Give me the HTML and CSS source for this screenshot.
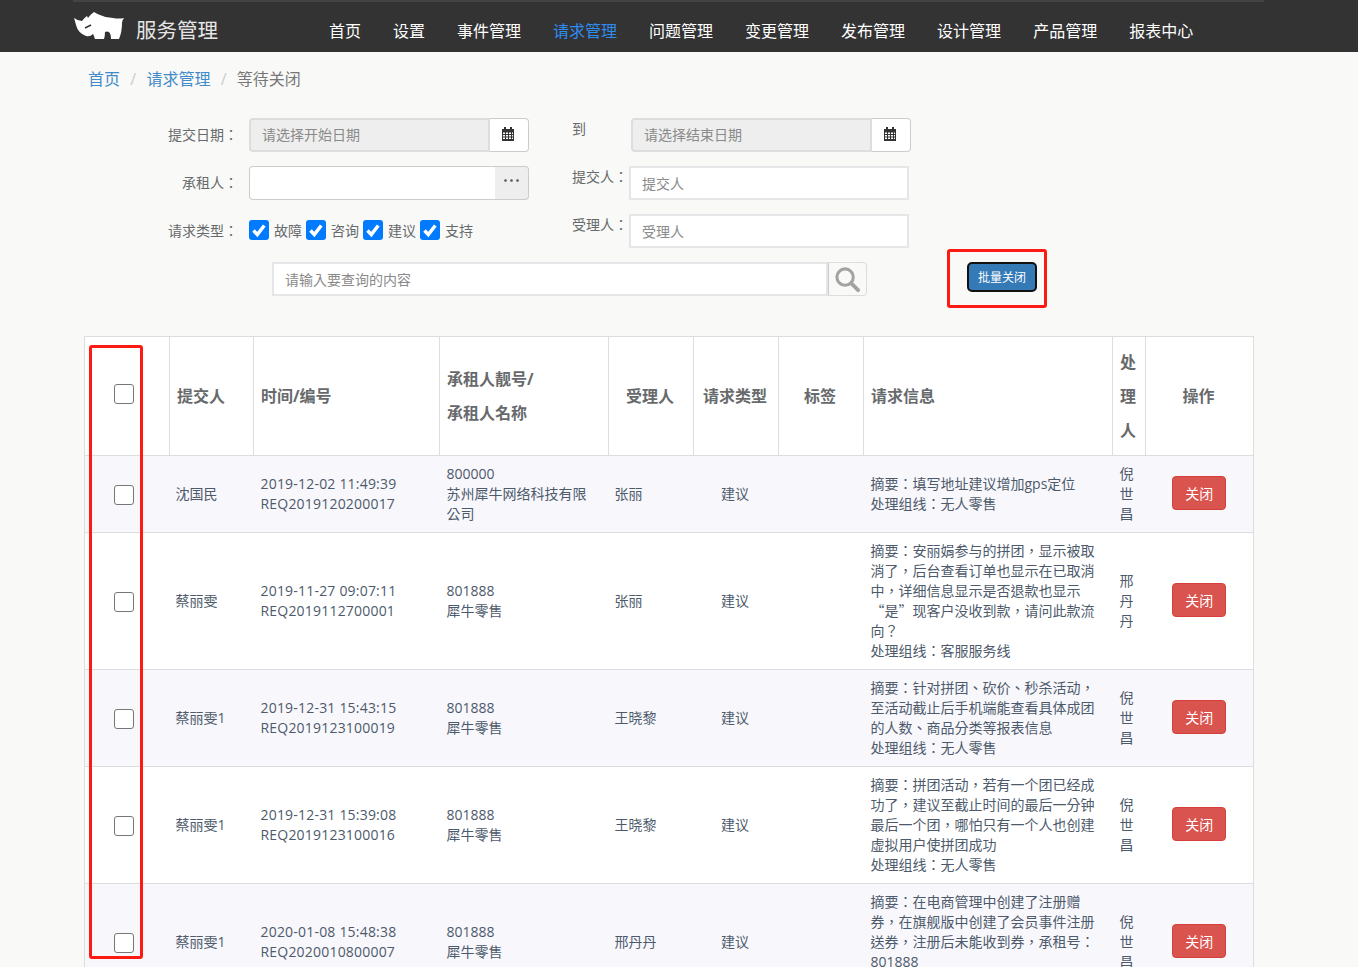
FILE: index.html
```html
<!DOCTYPE html>
<html lang="zh-CN">
<head>
  <meta charset="UTF-8">
  <title>服务管理</title>
  <link rel="stylesheet" href="styles.css">
</head>
<body>
  <div class="navbar">
    <div class="navbar-inner">
      <a class="brand">
        <svg class="logo" viewBox="0 0 51 27">
          <path fill="#fff" d="M1 6 Q5 9 9 9 Q11 6 14 4 L15 6 Q18 2 21 0 Q24 2 27 3 Q33 6 40 6 Q46 7 51 6 Q49 8 49 11 Q49 20 46 27 L38 27 Q38 22 36 20 Q34 19 32 20 Q32 24 31 27 L22 27 Q21 24 20 22 Q17 25 13 24 Q5 21 3 13 Q2 9 1 6 Z"/>
          <path fill="none" stroke="#333" stroke-width="1.500" d="M12 16 L18 13"/>
        </svg>
        <span class="brand-name">服务管理</span>
      </a>
      <ul class="nav">
        <li>首页</li>
        <li>设置</li>
        <li>事件管理</li>
        <li class="active">请求管理</li>
        <li>问题管理</li>
        <li>变更管理</li>
        <li>发布管理</li>
        <li>设计管理</li>
        <li>产品管理</li>
        <li>报表中心</li>
      </ul>
    </div>
  </div>

  <ol class="breadcrumb">
    <li><a>首页</a></li>
    <li class="sep">/</li>
    <li><a>请求管理</a></li>
    <li class="sep">/</li>
    <li class="current">等待关闭</li>
  </ol>

  <form class="filter">
    <div class="filter-left">
      <div class="row">
        <label>提交日期：</label>
        <div class="input-group">
          <input class="control readonly" placeholder="请选择开始日期" readonly>
          <span class="addon white">
            <svg class="cal" viewBox="0 0 14 14"><path fill="#333" d="M1 2h2V0h2v2h4V0h2v2h2v12H1z"/><path fill="#fff" d="M2 5.500h2v1.500H2zM5 5.500h2v1.500H5zM8 5.500h2v1.500H8zM11 5.500h1v1.500h-1zM2 8h2v1.500H2zM5 8h2v1.500H5zM8 8h2v1.500H8zM11 8h1v1.500h-1zM2 10.500h2V12H2zM5 10.500h2V12H5zM8 10.500h2V12H8zM11 10.500h1V12h-1z"/></svg>
          </span>
        </div>
      </div>
      <div class="row">
        <label>承租人：</label>
        <div class="input-group">
          <input class="control thin">
          <span class="addon grey">
            <svg class="dots" viewBox="0 0 15 3"><circle cx="1.500" cy="1.500" r="1.300" fill="#555"/><circle cx="7.500" cy="1.500" r="1.300" fill="#555"/><circle cx="13.500" cy="1.500" r="1.300" fill="#555"/></svg>
          </span>
        </div>
      </div>
      <div class="row">
        <label>请求类型：</label>
        <div class="checks">
          <span class="tick"><svg viewBox="0 0 20 20"><path fill="none" stroke="#fff" stroke-width="3.500" d="M4.500 10.500l3.800 4 7-9"/></svg></span><span class="tick-label">故障</span>
          <span class="tick"><svg viewBox="0 0 20 20"><path fill="none" stroke="#fff" stroke-width="3.500" d="M4.500 10.500l3.800 4 7-9"/></svg></span><span class="tick-label">咨询</span>
          <span class="tick"><svg viewBox="0 0 20 20"><path fill="none" stroke="#fff" stroke-width="3.500" d="M4.500 10.500l3.800 4 7-9"/></svg></span><span class="tick-label">建议</span>
          <span class="tick"><svg viewBox="0 0 20 20"><path fill="none" stroke="#fff" stroke-width="3.500" d="M4.500 10.500l3.800 4 7-9"/></svg></span><span class="tick-label">支持</span>
        </div>
      </div>
    </div>
    <div class="filter-right">
      <div class="row">
        <label class="top">到</label>
        <div class="input-group date-end">
          <input class="control readonly" placeholder="请选择结束日期" readonly>
          <span class="addon white">
            <svg class="cal" viewBox="0 0 14 14"><path fill="#333" d="M1 2h2V0h2v2h4V0h2v2h2v12H1z"/><path fill="#fff" d="M2 5.500h2v1.500H2zM5 5.500h2v1.500H5zM8 5.500h2v1.500H8zM11 5.500h1v1.500h-1zM2 8h2v1.500H2zM5 8h2v1.500H5zM8 8h2v1.500H8zM11 8h1v1.500h-1zM2 10.500h2V12H2zM5 10.500h2V12H5zM8 10.500h2V12H8zM11 10.500h1V12h-1z"/></svg>
          </span>
        </div>
      </div>
      <div class="row">
        <label class="top">提交人：</label>
        <input class="control plain" placeholder="提交人">
      </div>
      <div class="row">
        <label class="top">受理人：</label>
        <input class="control plain" placeholder="受理人">
      </div>
    </div>
    <div class="search-row">
      <div class="search">
        <input class="control" placeholder="请输入要查询的内容">
        <span class="search-btn">
          <svg viewBox="0 0 28 28"><circle cx="11.500" cy="11.500" r="8.500" fill="none" stroke="#a3a3a3" stroke-width="3.200"/><path stroke="#a3a3a3" stroke-width="4" stroke-linecap="round" d="M18 18l7 7"/></svg>
        </span>
      </div>
      <button type="button" class="btn-batch">批量关闭</button>
    </div>
  </form>

  <div class="mark mark-batch"></div>
  <div class="mark mark-checks"></div>

  <table class="list">
    <colgroup>
      <col class="c-check"><col class="c-user"><col class="c-time"><col class="c-renter"><col class="c-handler"><col class="c-type"><col class="c-tag"><col class="c-info"><col class="c-proc"><col class="c-op">
    </colgroup>
    <thead>
      <tr>
        <th><span class="box head-box"></span></th>
        <th>提交人</th>
        <th>时间/编号</th>
        <th>承租人靓号/<br>承租人名称</th>
        <th class="center">受理人</th>
        <th class="center">请求类型</th>
        <th class="center">标签</th>
        <th>请求信息</th>
        <th>处理人</th>
        <th class="center">操作</th>
      </tr>
    </thead>
    <tbody>
      <tr>
        <td><span class="box"></span></td>
        <td>沈国民</td>
        <td class="time">2019-12-02 11:49:39<br>REQ2019120200017</td>
        <td class="wide">800000<br>苏州犀牛网络科技有限公司</td>
        <td>张丽</td>
        <td class="center">建议</td>
        <td></td>
        <td class="info">摘要：填写地址建议增加gps定位<br>处理组线：无人零售</td>
        <td class="wide">倪世昌</td>
        <td class="op"><button type="button" class="btn-close">关闭</button></td>
      </tr>
      <tr>
        <td><span class="box"></span></td>
        <td>蔡丽雯</td>
        <td class="time">2019-11-27 09:07:11<br>REQ2019112700001</td>
        <td class="wide">801888<br>犀牛零售</td>
        <td>张丽</td>
        <td class="center">建议</td>
        <td></td>
        <td class="info">摘要：安丽娟参与的拼团，显示被取消了，后台查看订单也显示在已取消中，详细信息显示是否退款也显示<br><span class="cjk">“是”</span>现客户没收到款，请问此款流向？<br>处理组线：客服服务线</td>
        <td class="wide">邢丹丹</td>
        <td class="op"><button type="button" class="btn-close">关闭</button></td>
      </tr>
      <tr>
        <td><span class="box"></span></td>
        <td>蔡丽雯1</td>
        <td class="time">2019-12-31 15:43:15<br>REQ2019123100019</td>
        <td class="wide">801888<br>犀牛零售</td>
        <td>王晓黎</td>
        <td class="center">建议</td>
        <td></td>
        <td class="info">摘要：针对拼团、砍价、秒杀活动，至活动截止后手机端能查看具体成团的人数、商品分类等报表信息<br>处理组线：无人零售</td>
        <td class="wide">倪世昌</td>
        <td class="op"><button type="button" class="btn-close">关闭</button></td>
      </tr>
      <tr>
        <td><span class="box"></span></td>
        <td>蔡丽雯1</td>
        <td class="time">2019-12-31 15:39:08<br>REQ2019123100016</td>
        <td class="wide">801888<br>犀牛零售</td>
        <td>王晓黎</td>
        <td class="center">建议</td>
        <td></td>
        <td class="info">摘要：拼团活动，若有一个团已经成功了，建议至截止时间的最后一分钟最后一个团，哪怕只有一个人也创建虚拟用户使拼团成功<br>处理组线：无人零售</td>
        <td class="wide">倪世昌</td>
        <td class="op"><button type="button" class="btn-close">关闭</button></td>
      </tr>
      <tr>
        <td><span class="box"></span></td>
        <td>蔡丽雯1</td>
        <td class="time">2020-01-08 15:48:38<br>REQ2020010800007</td>
        <td class="wide">801888<br>犀牛零售</td>
        <td>邢丹丹</td>
        <td class="center">建议</td>
        <td></td>
        <td class="info">摘要：在电商管理中创建了注册赠券，在旗舰版中创建了会员事件注册送券，注册后未能收到券，承租号：801888<br>处理组线：无人零售</td>
        <td class="wide">倪世昌</td>
        <td class="op"><button type="button" class="btn-close">关闭</button></td>
      </tr>
    </tbody>
  </table>
</body>
</html>
```

FILE: styles.css
```css
* {
  box-sizing: border-box;
}
html, body {
  height: 967px;
  overflow: hidden;
}
body {
  margin: 0;
  position: relative;
  background-color: #f9f9f7;
  color: #676a6c;
  font-family: "Open Sans", "Noto Sans CJK TC", sans-serif;
  font-feature-settings: "locl" 0;
  font-size: 14px;
}
.navbar {
  height: 52px;
  background-color: #333;
  padding-left: 73px;
}
.navbar-inner {
  display: flex;
  width: 1191px;
  height: 52px;
  border-top: 2px solid #444;
}
.brand {
  display: flex;
  align-items: flex-start;
  width: 256px;
}
.logo {
  width: 51px;
  height: 27px;
  margin-top: 10px;
}
.brand-name {
  margin: 13px 0 0 12px;
  font-size: 20.500px;
  line-height: 30px;
  color: #e6e6e6;
}
.nav {
  list-style: none;
  display: flex;
  gap: 32px;
  margin: 0;
  padding: 19px 0 0;
  font-size: 16px;
  line-height: 21px;
  color: #fff;
}
.nav .active {
  color: #2f8cf0;
}
.breadcrumb {
  list-style: none;
  display: flex;
  margin: 0;
  padding: 16px 0 0 88px;
  font-size: 16px;
  line-height: 22px;
}
.breadcrumb a {
  color: #428bca;
}
.breadcrumb .sep {
  color: #ccc;
  padding: 0 10.250px;
}
.breadcrumb .current {
  color: #777;
}
.filter {
  display: flex;
  flex-wrap: wrap;
  margin-top: 28px;
  padding-left: 168px;
}
.filter-left {
  width: 404px;
}
.filter-right {
  width: 340px;
}
.row {
  display: flex;
  height: 34px;
  margin-bottom: 14px;
  align-items: center;
}
.filter-left label {
  width: 70px;
  margin-right: 11px;
  padding-bottom: 2px;
  text-align: right;
}
.filter-right label {
  width: 57px;
  align-self: flex-start;
  line-height: 22px;
}
.input-group {
  display: flex;
  width: 280px;
  height: 34px;
}
.date-end {
  margin-left: 2px;
}
.control {
  flex: 1;
  min-width: 0;
  height: 34px;
  padding: 0 11px;
  background-color: #fff;
  border: 2px solid #e5e6e7;
  font-family: inherit;
  font-feature-settings: inherit;
  font-size: 14px;
  color: #676a6c;
  outline: none;
}
.control::placeholder {
  color: #8a8a8a;
  opacity: 1;
}
.input-group .control {
  border-radius: 4px 0 0 4px;
}
.control.readonly {
  padding-bottom: 2px;
  background-color: #eee;
  border-color: #ddd;
}
.control.thin {
  border: 1px solid #ccc;
  border-right: 0;
}
.control.plain {
  flex: none;
  width: 280px;
}
.addon {
  display: flex;
  align-items: center;
  justify-content: center;
  border: 1px solid #ccc;
  border-left: 0;
  border-radius: 0 4px 4px 0;
}
.addon.white {
  width: 39px;
  background-color: #fff;
}
.addon.grey {
  width: 34px;
  background-color: #eee;
}
.dots {
  width: 15px;
  height: 3px;
  margin-bottom: 5px;
}
.cal {
  width: 14px;
  height: 14px;
  margin: 0 2px 2px 0;
}
.checks {
  display: flex;
  align-items: center;
  margin-bottom: 2px;
}
.tick {
  width: 20px;
  height: 20px;
  background-color: #007bff;
  border-radius: 3px;
  flex: none;
}
.tick svg {
  display: block;
}
.tick-label {
  width: 37px;
  padding-left: 5px;
}
.search-row {
  width: 100%;
  display: flex;
  padding-left: 104px;
}
.search {
  display: flex;
  width: 595px;
  height: 34px;
}
.search-btn {
  width: 39px;
  display: flex;
  align-items: center;
  justify-content: center;
  border: 1px solid #ddd;
  border-left: 1px solid #ccc;
  border-radius: 0 4px 4px 0;
}
.search-btn svg {
  width: 27px;
  height: 27px;
}
.btn-batch {
  width: 70px;
  height: 30px;
  margin-left: 100px;
  padding: 0;
  background-color: #337ab7;
  border: 2px solid #111;
  border-radius: 5px;
  color: #fff;
  font-family: inherit;
  font-feature-settings: inherit;
  font-size: 12px;
}
.mark {
  position: absolute;
  border: 3px solid #fc1a12;
  border-radius: 3px;
  z-index: 2;
}
.mark-batch {
  left: 947px;
  top: 249px;
  width: 100px;
  height: 59px;
}
.mark-checks {
  left: 89px;
  top: 345px;
  width: 54px;
  height: 614px;
}
.list {
  width: 1169px;
  margin: 40px 0 0 84px;
  border-collapse: collapse;
  table-layout: fixed;
  background-color: #fff;
  border: 1px solid #ddd;
  line-height: 20px;
}
.c-check { width: 85px; }
.c-user { width: 84px; }
.c-time { width: 186px; }
.c-renter { width: 169px; }
.c-handler { width: 85px; }
.c-type { width: 85px; }
.c-tag { width: 85px; }
.c-info { width: 249px; }
.c-proc { width: 33px; }
.c-op { width: 108px; }
.list th {
  padding: 8px 8px 8px 7px;
  border: 1px solid #ddd;
  font-size: 16px;
  line-height: 34px;
  text-align: left;
  color: #676a6c;
}
.list td {
  padding: 8px 7px 8px 6px;
  border-top: 1px solid #ddd;
  color: #4d5a6b;
  vertical-align: middle;
}
.list td.info {
  padding-left: 7px;
}
.list td.time {
  padding: 8px 8px 8px 7px;
  letter-spacing: 0.2px;
}
.list td.wide {
  padding: 8px 9px 8px 7px;
}
.cjk {
  font-family: "Noto Sans CJK TC", sans-serif;
  line-height: 1;
}
.list tbody tr:nth-child(odd) {
  background-color: #f8f7fc;
}
.list th.center {
  padding-left: 7px;
  padding-right: 9px;
  text-align: center;
}
.list td.center {
  padding-left: 6px;
  padding-right: 8px;
  text-align: center;
}
.list td.op {
  padding: 8px 7px;
}
.box {
  display: block;
  width: 20px;
  height: 20px;
  margin: 2px 0 0 23px;
  background-color: #fff;
  border: 1px solid #767676;
  border-radius: 3px;
}
.head-box {
  margin: 0 0 4px 22px;
}
.btn-close {
  display: block;
  width: 54px;
  height: 34px;
  margin: 0 auto 2px;
  padding: 0;
  background-color: #d9534f;
  border: 1px solid #d43f3a;
  border-radius: 4px;
  color: #fff;
  font-family: inherit;
  font-feature-settings: inherit;
  font-size: 14px;
}
```
